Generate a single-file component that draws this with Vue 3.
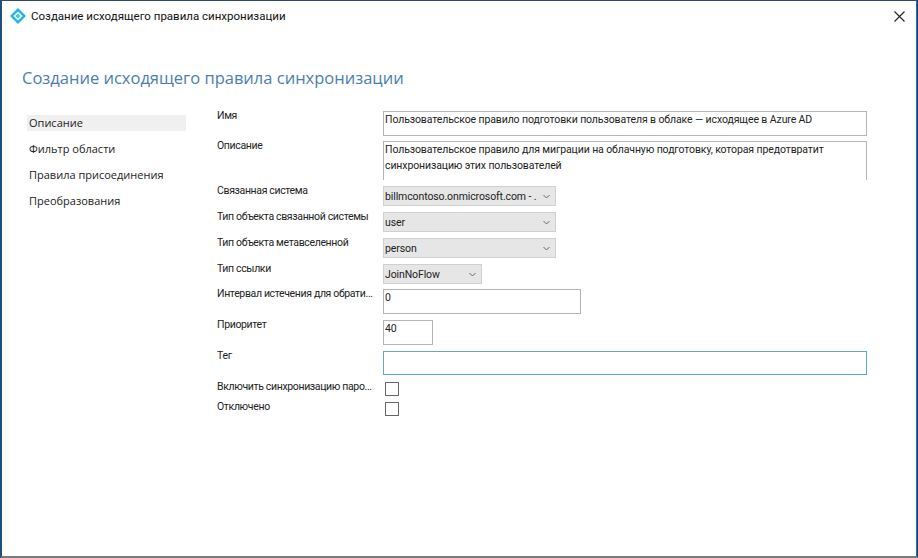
<template>
  <div class="window">
    <header class="titlebar">
      <svg class="titlebar__logo" width="16" height="16" viewBox="0 0 16 16">
        <path d="M8 0l8 8-8 8-8-8z" fill="#1eb4f0" />
        <path d="M8 3.4L12.6 8 8 12.6 3.4 8z" fill="#fff" />
        <path d="M8 5.6L10.4 8 8 10.4 5.6 8z" fill="#3cc4f5" />
      </svg>
      <span class="titlebar__text">{{ title }}</span>
      <svg class="titlebar__close" width="11" height="11" viewBox="0 0 11 11">
        <path d="M.5.5l10 10M10.5.5l-10 10" stroke="#222" stroke-width="1.1" fill="none" />
      </svg>
    </header>

    <h1 class="heading">{{ title }}</h1>

    <div class="content">
      <nav class="steps">
        <div
          v-for="(step, i) in steps"
          :key="step"
          class="steps__item"
          :class="{ 'steps__item--active': i === 0 }"
        >
          {{ step }}
        </div>
      </nav>

      <div class="form">
        <div class="row row--name">
          <label class="row__label">Имя</label>
          <div class="box box--wide">Пользовательское правило подготовки пользователя в облаке — исходящее в Azure AD</div>
        </div>
        <div class="row row--desc">
          <label class="row__label">Описание</label>
          <div class="box box--wide box--open">Пользовательское правило для миграции на облачную подготовку, которая предотвратит синхронизацию этих пользователей</div>
        </div>
        <div v-for="sel in selects" :key="sel.label" class="row row--select">
          <label class="row__label">{{ sel.label }}</label>
          <div class="select" :style="{ width: sel.width + 'px' }">
            <span class="select__value">{{ sel.value }}</span>
            <svg class="select__arrow" width="7" height="5" viewBox="0 0 7 5">
              <path d="M.5 1l3 3 3-3" stroke="#666" fill="none" />
            </svg>
          </div>
        </div>
        <div class="row row--interval">
          <label class="row__label">Интервал истечения для обрати...</label>
          <div class="box box--interval">0</div>
        </div>
        <div class="row row--priority">
          <label class="row__label">Приоритет</label>
          <div class="box box--priority">40</div>
        </div>
        <div class="row row--tag">
          <label class="row__label">Тег</label>
          <div class="box box--wide box--focus"></div>
        </div>
        <div class="row row--check">
          <label class="row__label">Включить синхронизацию паро...</label>
          <span class="check"></span>
        </div>
        <div class="row row--check">
          <label class="row__label">Отключено</label>
          <span class="check"></span>
        </div>
      </div>
    </div>
  </div>
</template>

<script setup>
const title = 'Создание исходящего правила синхронизации'

const steps = ['Описание', 'Фильтр области', 'Правила присоединения', 'Преобразования']

const selects = [
  { label: 'Связанная система', value: 'billmcontoso.onmicrosoft.com - .', width: 173 },
  { label: 'Тип объекта связанной системы', value: 'user', width: 173 },
  { label: 'Тип объекта метавселенной', value: 'person', width: 173 },
  { label: 'Тип ссылки', value: 'JoinNoFlow', width: 99 },
]
</script>

<style>
html,
body {
  margin: 0;
  background: #fff;
}
</style>

<style scoped>
.window {
  box-sizing: border-box;
  width: 918px;
  height: 558px;
  background: #fff;
  border-top: 1px solid #2c4a63;
  border-left: 2px solid #1d4f7c;
  border-right: 1px solid #1d3f5c;
  border-bottom: 2px solid #7a7a7a;
  box-shadow: inset -1px 0 0 #1a73c9;
  font-family: Roboto, "Noto Sans", sans-serif;
  color: #222;
  overflow: hidden;
}

.titlebar {
  display: flex;
  align-items: center;
  height: 30px;
  padding: 0 12px 0 8px;
}

.titlebar__text {
  margin-left: 5px;
  font-size: 11.5px;
  color: #111;
}

.titlebar__close {
  margin-left: auto;
}

.heading {
  margin: 35px 0 0 20px;
  font-family: "Open Sans", sans-serif;
  font-size: 16.5px;
  line-height: 24px;
  font-weight: 400;
  color: #4a7eb0;
}

.content {
  display: flex;
  margin-top: 21px;
}

.steps {
  width: 159px;
  margin-left: 25px;
  padding-top: 4px;
  display: flex;
  flex-direction: column;
  gap: 10px;
}

.steps__item {
  height: 16px;
  line-height: 16px;
  padding-left: 2px;
  font-family: "Open Sans", sans-serif;
  font-size: 11px;
  white-space: nowrap;
}

.steps__item--active {
  background: #f0f0f0;
}

.form {
  margin-left: 31px;
  display: flex;
  flex-direction: column;
}

.row {
  display: flex;
}

.row__label {
  width: 166px;
  flex: none;
  font-size: 10.5px;
  letter-spacing: -0.35px;
  line-height: 9px;
  white-space: nowrap;
}

.row--name {
  height: 25px;
  margin-bottom: 5px;
}

.row--desc {
  height: 39px;
  margin-bottom: 6px;
}

.row--select {
  height: 20px;
  margin-bottom: 6px;
}

.row--interval {
  height: 25px;
  margin-top: -1px;
  margin-bottom: 6px;
}

.row--priority {
  height: 25px;
  margin-bottom: 6px;
}

.row--tag {
  height: 24px;
  margin-bottom: 7px;
}

.row--check {
  height: 13px;
  margin-bottom: 7px;
}

.box {
  box-sizing: border-box;
  border: 1px solid #b4b4b4;
  padding: 0 1px;
  font-size: 10.5px;
  letter-spacing: -0.11px;
  line-height: 16px;
}

.box--wide {
  width: 484px;
}

.box--open {
  border-bottom: none;
}

.box--interval {
  width: 198px;
}

.box--priority {
  width: 50px;
}

.box--focus {
  border-color: #5ea6dc;
}

.select {
  box-sizing: border-box;
  display: flex;
  align-items: center;
  height: 20px;
  padding: 0 5px 0 1px;
  background: #e6e6e6;
  border: 1px solid #d0d0d0;
  font-size: 10.5px;
  letter-spacing: -0.11px;
}

.select__value {
  white-space: nowrap;
}

.select__arrow {
  margin-left: auto;
  flex: none;
}

.check {
  box-sizing: border-box;
  width: 14px;
  height: 14px;
  margin-left: 2px;
  border: 1px solid #666;
  background: #fff;
}
</style>
